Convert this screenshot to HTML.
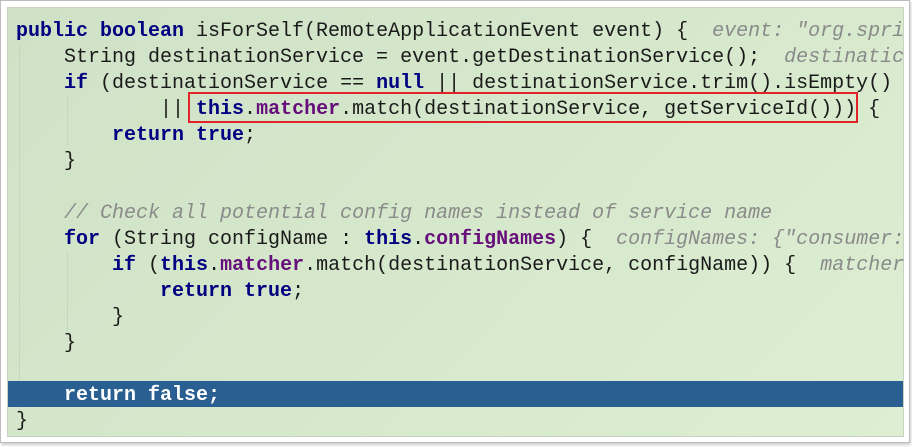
<!DOCTYPE html>
<html><head><meta charset="utf-8"><style>
body{margin:0;width:912px;height:447px;background:#fff;overflow:hidden;position:relative}
.frame{position:absolute;left:0;top:0;width:908px;height:441px;border:1px solid #bdbdbd;background:#fff;box-shadow:1px 2px 3px #ccc}
.panel{position:absolute;left:7px;top:7px;width:895px;height:428px;background:linear-gradient(135deg,#cfe1c6 0%,#d6e8cc 50%,#ddeed3 100%);border:1px solid #c8d4c2}
pre{margin:0;position:absolute;left:8px;top:11px;font-family:"Liberation Mono",monospace;font-size:20px;line-height:26px;color:#1a1a1a;white-space:pre}
.k{color:#000080;font-weight:bold}.f{color:#660e7a;font-weight:bold}.c{color:#8a8a8a;font-style:italic}
.hl{position:absolute;left:0;top:373px;width:895px;height:26px;background:#2a5f91}
.box{position:absolute;left:180px;top:84px;width:666px;height:27px;border:2px solid #e3232a}
.g{position:absolute;width:1px;background:#c7d6bf}
</style></head><body>
<div class="frame"></div>
<div class="panel">
<div class="g" style="left:11px;top:35px;height:370px"></div>
<div class="g" style="left:59px;top:87px;height:50px"></div>
<div class="g" style="left:59px;top:243px;height:80px"></div>
<div class="hl"></div>
<div class="box"></div>
<pre><span class="k">public boolean</span> isForSelf(RemoteApplicationEvent event) {  <span class="c">event: "org.spri</span>
    String destinationService = event.getDestinationService();  <span class="c">destinatic</span>
    <span class="k">if</span> (destinationService == <span class="k">null</span> || destinationService.trim().isEmpty()
            || <span class="k">this</span>.<span class="f">matcher</span>.match(destinationService, getServiceId())) {
        <span class="k">return true</span>;
    }

    <span class="c">// Check all potential config names instead of service name</span>
    <span class="k">for</span> (String configName : <span class="k">this</span>.<span class="f">configNames</span>) {  <span class="c">configNames: {"consumer:</span>
        <span class="k">if</span> (<span class="k">this</span>.<span class="f">matcher</span>.match(destinationService, configName)) {  <span class="c">matcher</span>
            <span class="k">return true</span>;
        }
    }

<span style="color:#fff;font-weight:bold">    return false;</span>
}</pre>
</div>
</body></html>
